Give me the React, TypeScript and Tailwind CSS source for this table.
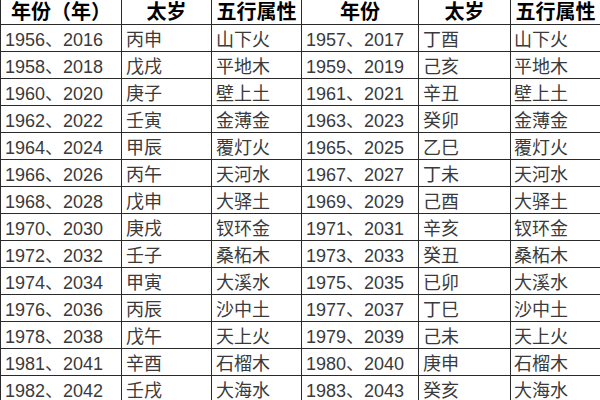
import React from "react";

const rows: [string, string, string, string, string, string][] = [
  ["1956、2016", "丙申", "山下火", "1957、2017", "丁酉", "山下火"],
  ["1958、2018", "戊戌", "平地木", "1959、2019", "己亥", "平地木"],
  ["1960、2020", "庚子", "壁上土", "1961、2021", "辛丑", "壁上土"],
  ["1962、2022", "壬寅", "金薄金", "1963、2023", "癸卯", "金薄金"],
  ["1964、2024", "甲辰", "覆灯火", "1965、2025", "乙巳", "覆灯火"],
  ["1966、2026", "丙午", "天河水", "1967、2027", "丁未", "天河水"],
  ["1968、2028", "戊申", "大驿土", "1969、2029", "己酉", "大驿土"],
  ["1970、2030", "庚戌", "钗环金", "1971、2031", "辛亥", "钗环金"],
  ["1972、2032", "壬子", "桑柘木", "1973、2033", "癸丑", "桑柘木"],
  ["1974、2034", "甲寅", "大溪水", "1975、2035", "已卯", "大溪水"],
  ["1976、2036", "丙辰", "沙中土", "1977、2037", "丁巳", "沙中土"],
  ["1978、2038", "戊午", "天上火", "1979、2039", "己未", "天上火"],
  ["1981、2041", "辛酉", "石榴木", "1980、2040", "庚申", "石榴木"],
  ["1982、2042", "壬戌", "大海水", "1983、2043", "癸亥", "大海水"],
];

const headers = ["年份（年）", "太岁", "五行属性", "年份", "太岁", "五行属性"];

export default function App() {
  return (
    <div
      className="w-[600px] h-[400px] overflow-hidden bg-white"
      style={{ fontFamily: '"Liberation Sans", "Noto Sans CJK SC", sans-serif' }}
    >
      <div className="grid grid-cols-[121px_90px_90px_117px_92px_90px] border-l border-[#2a2a2a]">
        {headers.map((h, i) => (
          <div
            key={"h" + i}
            className="h-[25px] flex items-center justify-center border-r border-b border-[#2a2a2a] text-[20px] font-bold text-black leading-none whitespace-nowrap"
          >
            {h}
          </div>
        ))}
        {rows.map((r, ri) =>
          r.map((c, ci) => (
            <div
              key={ri + "-" + ci}
              className={
                "h-[27px] flex items-center pt-[3px] border-r border-b border-[#2a2a2a] text-[18px] text-[#3a3a3a] leading-none whitespace-nowrap " +
                (ci === 0 || ci === 3 ? "pl-[4px]" : ci === 5 ? "pl-[3px]" : "pl-[4px]")
              }
            >
              {c}
            </div>
          ))
        )}
      </div>
    </div>
  );
}
